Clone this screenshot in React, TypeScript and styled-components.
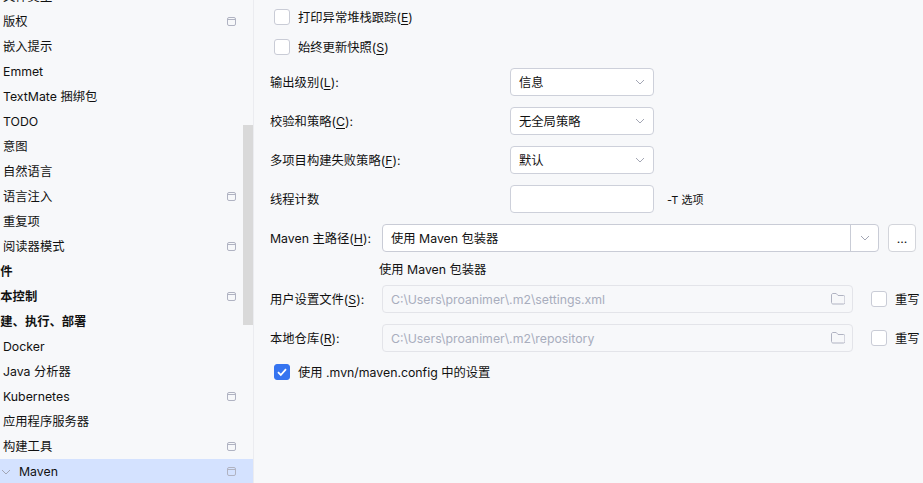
import React from "react";
import styled, { createGlobalStyle } from "styled-components";

const GlobalStyle = createGlobalStyle`
  html, body {
    margin: 0;
    height: 100%;
    overflow: hidden;
    background: #f7f8fa;
  }
  body {
    font-family: Inter, "Noto Sans CJK SC", "Noto Sans", sans-serif;
    font-size: 12.3px;
    color: #111;
  }
  u {
    text-underline-offset: 2px;
  }
`;

type NavItem = {
  label: string;
  scoped?: boolean;
  bold?: boolean;
  selected?: boolean;
};

const navItems: NavItem[] = [
  { label: "文件类型" },
  { label: "版权", scoped: true },
  { label: "嵌入提示" },
  { label: "Emmet" },
  { label: "TextMate 捆绑包" },
  { label: "TODO" },
  { label: "意图" },
  { label: "自然语言" },
  { label: "语言注入", scoped: true },
  { label: "重复项" },
  { label: "阅读器模式", scoped: true },
  { label: "插件", bold: true },
  { label: "版本控制", bold: true, scoped: true },
  { label: "构建、执行、部署", bold: true },
  { label: "Docker" },
  { label: "Java 分析器" },
  { label: "Kubernetes", scoped: true },
  { label: "应用程序服务器" },
  { label: "构建工具", scoped: true },
  { label: "Maven", scoped: true, selected: true },
];

const Chevron = ({ size = 12 }: { size?: number }) => (
  <svg width={size} height={size} viewBox="0 0 12 12" fill="none">
    <path d="M2 4l4 4 4-4" stroke="#a3a6b4" strokeWidth="1" />
  </svg>
);

const ScopeIcon = () => (
  <svg width="9" height="9" viewBox="0 0 9 9" fill="none">
    <rect x="0.5" y="0.5" width="8" height="8" rx="1.5" stroke="#b0b3c2" />
    <path d="M0.5 2.5h8" stroke="#b0b3c2" />
  </svg>
);

const FolderIcon = () => (
  <svg width="14" height="12" viewBox="0 0 14 12" fill="none">
    <path
      d="M0.5 2c0-.8.7-1.5 1.5-1.5h3.2l1.8 2h5.5c.8 0 1.5.7 1.5 1.5v5.5c0 .8-.7 1.5-1.5 1.5H2c-.8 0-1.5-.7-1.5-1.5V2z"
      stroke="#b0b3c2"
    />
  </svg>
);

const Check = () => (
  <svg width="12" height="12" viewBox="0 0 12 12" fill="none">
    <path d="M2 6.2l2.8 2.8L10 3.2" stroke="#fff" strokeWidth="1.8" />
  </svg>
);

export default function App() {
  return (
    <>
      <GlobalStyle />
      <Page>
        <Sidebar>
          {navItems.map((item) => (
            <NavRow key={item.label} $selected={item.selected}>
              {item.selected && <Chevron size={12} />}
              <NavLabel $bold={item.bold} $selected={item.selected}>
                {item.label}
              </NavLabel>
              {item.scoped && <ScopeIcon />}
            </NavRow>
          ))}
          <ScrollThumb />
        </Sidebar>
        <Panel>
          <CheckRow>
            <CheckBox />
            <span>打印异常堆栈跟踪(<u>E</u>)</span>
          </CheckRow>
          <CheckRow>
            <CheckBox />
            <span>始终更新快照(<u>S</u>)</span>
          </CheckRow>

          <OptionList $top={6}>
            <OptionRow>
              <OptionLabel>输出级别(<u>L</u>):</OptionLabel>
              <Select>
                信息
                <Chevron />
              </Select>
            </OptionRow>
            <OptionRow>
              <OptionLabel>校验和策略(<u>C</u>):</OptionLabel>
              <Select>
                无全局策略
                <Chevron />
              </Select>
            </OptionRow>
            <OptionRow>
              <OptionLabel>多项目构建失败策略(<u>F</u>):</OptionLabel>
              <Select>
                默认
                <Chevron />
              </Select>
            </OptionRow>
            <OptionRow>
              <OptionLabel>线程计数</OptionLabel>
              <Select />
              <Hint>-T 选项</Hint>
            </OptionRow>
            <OptionRow>
              <PathLabel>Maven 主路径(<u>H</u>):</PathLabel>
              <Combo>
                <ComboText>使用 Maven 包装器</ComboText>
                <ComboArrow>
                  <Chevron />
                </ComboArrow>
              </Combo>
              <DotsButton>...</DotsButton>
            </OptionRow>
          </OptionList>

          <Helper>使用 Maven 包装器</Helper>

          <OptionList>
            <OptionRow>
              <PathLabel>用户设置文件(<u>S</u>):</PathLabel>
              <PathField>
                C:\Users\proanimer\.m2\settings.xml
                <FolderIcon />
              </PathField>
              <Override>
                <CheckBox />
                <span>重写</span>
              </Override>
            </OptionRow>
            <OptionRow>
              <PathLabel>本地仓库(<u>R</u>):</PathLabel>
              <PathField>
                C:\Users\proanimer\.m2\repository
                <FolderIcon />
              </PathField>
              <Override>
                <CheckBox />
                <span>重写</span>
              </Override>
            </OptionRow>
          </OptionList>

          <BottomCheck>
            <CheckBox $checked>
              <Check />
            </CheckBox>
            <span>使用 .mvn/maven.config 中的设置</span>
          </BottomCheck>
        </Panel>
      </Page>
    </>
  );
}

const Page = styled.div`
  display: flex;
  height: 100vh;
  overflow: hidden;
`;

const Sidebar = styled.div`
  position: relative;
  flex: 0 0 254px;
  box-sizing: border-box;
  height: 100%;
  border-right: 1px solid #ebecf0;
  overflow: hidden;
  & > div:first-child {
    margin-top: -16px;
  }
`;

const NavRow = styled.div<{ $selected?: boolean }>`
  display: flex;
  align-items: center;
  height: 25px;
  padding-left: ${(p) => (p.$selected ? "0" : "3px")};
  padding-right: 17px;
  background: ${(p) => (p.$selected ? "#d4e2ff" : "transparent")};
`;

const NavLabel = styled.span<{ $bold?: boolean; $selected?: boolean }>`
  flex: 1;
  white-space: nowrap;
  padding-bottom: 1px;
  font-weight: ${(p) => (p.$bold ? 700 : 400)};
  margin-left: ${(p) => (p.$bold ? "-15px" : p.$selected ? "7px" : "0")};
`;

const ScrollThumb = styled.div`
  position: absolute;
  top: 125px;
  left: 243px;
  width: 10px;
  height: 200px;
  background: #d9d9d9;
`;

const Panel = styled.div`
  flex: 1;
  min-width: 0;
  padding: 2px 0 0 16px;
`;

const CheckRow = styled.div`
  display: flex;
  align-items: center;
  gap: 8px;
  height: 30px;
  padding-left: 4px;
`;

const CheckBox = styled.div<{ $checked?: boolean }>`
  display: flex;
  align-items: center;
  justify-content: center;
  flex: none;
  box-sizing: border-box;
  width: 16px;
  height: 16px;
  border-radius: 3px;
  border: 1px solid ${(p) => (p.$checked ? "#3574f0" : "#c9ccd6")};
  background: ${(p) => (p.$checked ? "#3574f0" : "#fff")};
`;

const OptionList = styled.div<{ $top?: number }>`
  display: flex;
  flex-direction: column;
  gap: 11px;
  margin-top: ${(p) => p.$top ?? 0}px;
`;

const OptionRow = styled.div`
  display: flex;
  align-items: center;
  height: 28px;
`;

const OptionLabel = styled.div`
  flex: 0 0 240px;
`;

const PathLabel = styled.div`
  flex: 0 0 112px;
  white-space: nowrap;
`;

const Select = styled.div`
  display: flex;
  align-items: center;
  justify-content: space-between;
  box-sizing: border-box;
  width: 144px;
  height: 28px;
  padding: 0 7px 0 8px;
  background: #fff;
  border: 1px solid #cdd0da;
  border-radius: 4px;
`;

const Hint = styled.span`
  margin-left: 13px;
  font-size: 11px;
`;

const Combo = styled.div`
  display: flex;
  align-items: center;
  box-sizing: border-box;
  width: 497px;
  height: 28px;
  background: #fff;
  border: 1px solid #c9ccd6;
  border-radius: 4px;
`;

const ComboText = styled.div`
  flex: 1;
  padding-left: 8px;
`;

const ComboArrow = styled.div`
  display: flex;
  align-items: center;
  justify-content: center;
  width: 27px;
  height: 100%;
  border-left: 1px solid #c9ccd6;
`;

const DotsButton = styled.div`
  display: flex;
  align-items: center;
  justify-content: center;
  box-sizing: border-box;
  width: 28px;
  height: 28px;
  margin-left: 9px;
  background: #fff;
  border: 1px solid #d3d5db;
  border-radius: 4px;
`;

const Helper = styled.div`
  display: flex;
  align-items: center;
  height: 33px;
  padding-left: 109px;
`;

const PathField = styled.div`
  display: flex;
  align-items: center;
  justify-content: space-between;
  box-sizing: border-box;
  width: 471px;
  height: 28px;
  padding: 0 7px 0 8px;
  color: #a8adbd;
  background: #f7f8fa;
  border: 1px solid #e3e4e9;
  border-radius: 4px;
`;

const Override = styled.div`
  display: flex;
  align-items: center;
  gap: 8px;
  margin-left: 18px;
`;

const BottomCheck = styled(CheckRow)`
  margin-top: 5px;
`;
